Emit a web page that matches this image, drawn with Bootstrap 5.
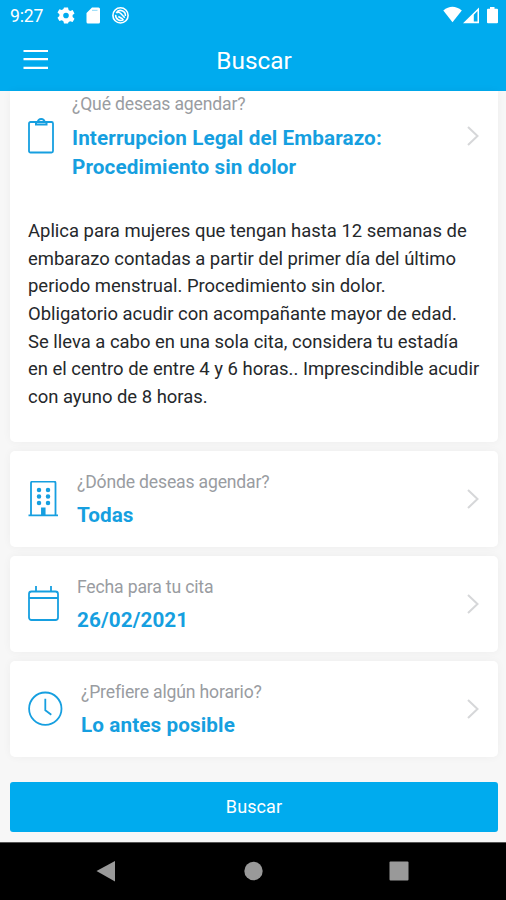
<!DOCTYPE html>
<html lang="es">
<head>
<meta charset="utf-8">
<meta name="viewport" content="width=device-width, initial-scale=1">
<title>Buscar</title>
<link href="https://cdn.jsdelivr.net/npm/bootstrap@5.3.0/dist/css/bootstrap.min.css" rel="stylesheet">
<style>
body{font-family:Roboto,"Liberation Sans",sans-serif;background:#f7f7f7;color:#25282b;height:900px;overflow:hidden}
svg{display:block;flex:none}
.app-head{height:91px;background:#00abee;color:#fff}
.status{height:30px;padding:0 7px 0 10px}
.clock-text{font-size:17.6px;line-height:30px;letter-spacing:-.2px;width:47px;padding-top:1px}
.title-bar{height:61px;display:grid;grid-template-columns:60px 1fr 60px;padding:0 1px 0 0}
.title-bar h1{font-size:24.4px;font-weight:400;line-height:61px;padding-left:3px}
.menu-btn{padding:18px 0 0 23px;line-height:0}
.content{height:751px;padding:0 8px 0 10px}
.option{border:0;border-radius:5px;box-shadow:0 0 9px rgba(0,0,0,.045);padding:0 18px}
.option+.option{margin-top:9px}
.option-row{height:96px;gap:18px}
.first{height:351px;border-radius:0 0 5px 5px}
.first .option-row{height:90px}
.caption-text{font-size:17.6px;line-height:24px;color:#999ca1;padding-top:1px;letter-spacing:-.17px}
.value-text{font-size:20.7px;line-height:29px;font-weight:700;color:#169fe0;letter-spacing:.1px}
.option-row .value-text{margin-top:7px}
.first .option-row .value-text{margin-top:8px}
.option-row .flex-grow-1{padding-top:1px}
.detail{font-size:18.45px;line-height:27.65px;margin:37px 0 0;white-space:nowrap}
.search-btn,.search-btn:hover{--bs-btn-color:#fff;height:50px;margin-top:25px;background:#00abee;color:#fff;border:0;border-radius:3px;font-size:18px;letter-spacing:.1px;padding-bottom:8px}
.system-nav{height:58px;background:#000;border-top:1px solid #555}
.icon{stroke:#169fe0;stroke-width:1.8;fill:none}
.chev{stroke:#d6d7d9;stroke-width:2;fill:none;margin-right:1px}
</style>
</head>
<body>
<header class="app-head">
  <div class="status d-flex align-items-center">
    <span class="clock-text">9:27</span>
    <svg width="74" height="20" viewBox="57 5 74 20" fill="#fff">
      <path fill-rule="evenodd" d="M64 7.500h4l.6 2.500 1.600.9 2.400-.8 1.900 3.300-1.900 1.700v1.900l1.900 1.700-1.900 3.300-2.400-.8-1.600.9L68 23.500h-4l-.6-2.300-1.600-.9-2.400.8-1.900-3.300 1.900-1.700v-1.900l-1.900-1.700 1.900-3.300 2.400.8 1.600-.9zM66 12.700a2.800 2.800 0 1 0 0 5.600 2.800 2.800 0 0 0 0-5.600z"/>
      <path d="M92 7.500h6.500a1.500 1.500 0 0 1 1.500 1.500v13a1.500 1.500 0 0 1-1.500 1.500h-10.500a1.500 1.500 0 0 1-1.500-1.500V13z"/><path d="M92 10.300h5.500" stroke="#8bd7f7"/>
      <circle cx="120.500" cy="15.400" r="7.600" fill="none" stroke="#fff" stroke-width="1.600"/>
      <path d="M116.200 12.800a5 5 0 0 1 9.200 3.200M115.700 14.800a5 5 0 0 0 8 4.600M116.300 13q2.500-1.700 4.500.5l4 4.300M118.300 16.500l4.500 2.500" fill="none" stroke="#fff" stroke-width="1.500"/>
    </svg>
    <svg class="ms-auto" width="57" height="20" viewBox="442 5 57 20" fill="#fff">
      <path d="M443.300 10.500q9-7.500 18.500 0L452.500 22.300z"/>
      <path d="M463 23.200L479 7.500v15.700zM473.800 14.700v6.900h3.700V11z" fill-rule="evenodd"/>
      <path d="M490 7h4.500v1.800h2.500q1 0 1 1v12.400q0 1-1 1h-9q-1 0-1-1V9.800q0-1 1-1h2z"/>
    </svg>
  </div>
  <div class="title-bar">
    <div class="menu-btn"><svg width="26" height="24" stroke="#fff" stroke-width="2.200"><path d="M.5 3H25M.5 11.200H25M.5 19.800H25"/></svg></div>
    <h1 class="text-center m-0">Buscar</h1>
  </div>
</header>
<main class="content">
  <section class="card option first">
    <div class="option-row d-flex align-items-center">
      <svg class="icon" width="26" height="36" viewBox="0 0 26 36"><rect x="1" y="4" width="24" height="30.500" rx="1.500"/><path d="M8 4v2.500h10.500V4M9.700 4.500a3.500 3.500 0 0 1 7 0" stroke-width="2"/></svg>
      <div class="flex-grow-1"><div class="caption-text">¿Qué deseas agendar?</div><div class="value-text">Interrupcion Legal del Embarazo:<br>Procedimiento sin dolor</div></div>
      <svg class="chev" width="12" height="20"><path d="M1 1l9.500 9L1 19"/></svg>
    </div>
    <p class="detail">Aplica para mujeres que tengan hasta 12 semanas de<br>embarazo contadas a partir del primer día del último<br>periodo menstrual. Procedimiento sin dolor.<br>Obligatorio acudir con acompañante mayor de edad.<br>Se lleva a cabo en una sola cita, considera tu estadía<br>en el centro de entre 4 y 6 horas.. Imprescindible acudir<br>con ayuno de 8 horas.</p>
  </section>
  <section class="card option">
    <div class="option-row d-flex align-items-center">
      <svg class="icon" width="31" height="36" viewBox="0 0 31 36"><path d="M3 33.500V2q0-1.500 1.500-1.500h21.500q1.500 0 1.500 1.500v31.500M.5 34.300h29.500"/><path d="M11 9h.01M20 9h.01M11 15.500h.01M20 15.500h.01M11 22h.01M20 22h.01" stroke-width="4.500" stroke-linecap="round"/><path d="M15.300 26.500v7.500" stroke-width="4.500"/></svg>
      <div class="flex-grow-1"><div class="caption-text">¿Dónde deseas agendar?</div><div class="value-text">Todas</div></div>
      <svg class="chev" width="12" height="20"><path d="M1 1l9.500 9L1 19"/></svg>
    </div>
  </section>
  <section class="card option">
    <div class="option-row d-flex align-items-center">
      <svg class="icon" width="31" height="36" viewBox="0 0 31 36"><rect x="1" y="5.500" width="29" height="28.500" rx="2.500"/><path d="M1 12h29M8 5.500V0M23 5.500V0"/></svg>
      <div class="flex-grow-1"><div class="caption-text">Fecha para tu cita</div><div class="value-text">26/02/2021</div></div>
      <svg class="chev" width="12" height="20"><path d="M1 1l9.500 9L1 19"/></svg>
    </div>
  </section>
  <section class="card option">
    <div class="option-row d-flex align-items-center">
      <svg class="icon" width="35" height="36" viewBox="0 0 35 36"><circle cx="17.300" cy="17.700" r="16.200"/><path d="M17.300 7.700v11.500l6 4.500"/></svg>
      <div class="flex-grow-1"><div class="caption-text">¿Prefiere algún horario?</div><div class="value-text">Lo antes posible</div></div>
      <svg class="chev" width="12" height="20"><path d="M1 1l9.500 9L1 19"/></svg>
    </div>
  </section>
  <button class="btn search-btn w-100" type="button">Buscar</button>
</main>
<footer class="system-nav">
  <svg width="506" height="57" fill="#999"><path d="M96.500 28L115 18v20.500z"/><circle cx="253.500" cy="28" r="9.200"/><rect x="389.500" y="18.500" width="19" height="19" rx="1"/></svg>
</footer>
<script src="https://cdn.jsdelivr.net/npm/bootstrap@5.3.0/dist/js/bootstrap.bundle.min.js"></script>
</body>
</html>
